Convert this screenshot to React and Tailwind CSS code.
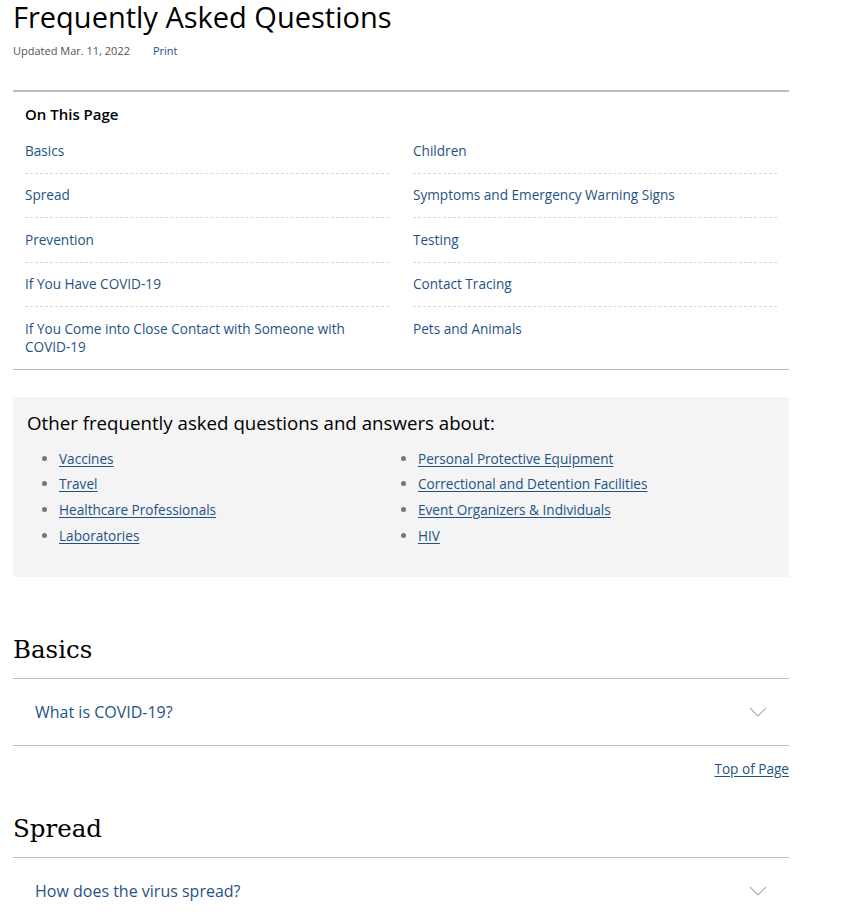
const onThisPage = [
  ['Basics', 'Children'],
  ['Spread', 'Symptoms and Emergency Warning Signs'],
  ['Prevention', 'Testing'],
  ['If You Have COVID-19', 'Contact Tracing'],
  ['If You Come into Close Contact with Someone with COVID-19', 'Pets and Animals'],
];

const otherLeft = ['Vaccines', 'Travel', 'Healthcare Professionals', 'Laboratories'];
const otherRight = [
  'Personal Protective Equipment',
  'Correctional and Detention Facilities',
  'Event Organizers & Individuals',
  'HIV',
];

function Chevron() {
  return (
    <svg width="18" height="10" viewBox="0 0 18 10" fill="none" className="text-[#9fb0c0]">
      <polyline points="1,1 9,9 17,1" stroke="currentColor" strokeWidth="1.1" />
    </svg>
  );
}

function LinkList({ items }) {
  return (
    <ul className="list-disc pl-[32px] marker:text-[#777]">
      {items.map((item) => (
        <li key={item} className="h-[25.7px] text-[13.6px] leading-[25.7px]">
          <a href="#" className="text-[#1f5385] underline underline-offset-2">
            {item}
          </a>
        </li>
      ))}
    </ul>
  );
}

function Section({ title, question }) {
  return (
    <section>
      <h2 className="pb-[10px] font-['DejaVu_Serif',serif] text-[24.5px] leading-[36px] text-black">
        {title}
      </h2>
      <div className="flex h-[68px] items-center justify-between border-y border-[#c0c0c0] pl-[22px] pr-[22px]">
        <span className="text-[16px] text-[#1f5385]">{question}</span>
        <Chevron />
      </div>
    </section>
  );
}

export default function App() {
  return (
    <div className="min-h-screen bg-white font-['Open_Sans',sans-serif] text-[#222]">
      <div className="w-[776px] pl-[13px] box-content">
        <h1 className="pt-0 text-[29px] leading-[33px] text-black">Frequently Asked Questions</h1>
        <div className="mt-[10px] flex gap-[23px] text-[11px] leading-[16px]">
          <span className="text-[#555]">Updated Mar. 11, 2022</span>
          <a href="#" className="text-[#1f5385]">Print</a>
        </div>

        <nav className="mt-[31px] border-t-2 border-b border-[#bbbbbb] px-[12px] pb-0">
          <h3 className="pt-[12px] text-[15px] font-semibold leading-[20px] text-black">On This Page</h3>
          <div className="mt-[5px] grid grid-cols-2 gap-x-[24px]">
            {onThisPage.map(([left, right], i) => {
              const last = i === onThisPage.length - 1;
              const cls = `py-[12.75px] text-[13.6px] leading-[18px] text-[#1f5385] ${last ? '' : 'border-b border-dashed border-[#d8d8d8]'}`;
              return [
                <a key={left} href="#" className={cls}>{left}</a>,
                <a key={right} href="#" className={cls}>{right}</a>,
              ];
            })}
          </div>
        </nav>

        <div className="mt-[27px] h-[180px] bg-[#f4f4f4] px-[14px] pt-[14px]">
          <h3 className="text-[18.7px] leading-[24px] text-black">Other frequently asked questions and answers about:</h3>
          <div className="mt-[11px] grid grid-cols-[359px_1fr]">
            <LinkList items={otherLeft} />
            <LinkList items={otherRight} />
          </div>
        </div>

        <div className="mt-[55px]">
          <Section title="Basics" question="What is COVID-19?" />
          <div className="flex justify-end pt-[13px]">
            <a href="#" className="text-[13.6px] leading-[20px] text-[#1f5385] underline underline-offset-2">
              Top of Page
            </a>
          </div>
        </div>

        <div className="mt-[32px]">
          <Section title="Spread" question="How does the virus spread?" />
        </div>
      </div>
    </div>
  );
}
